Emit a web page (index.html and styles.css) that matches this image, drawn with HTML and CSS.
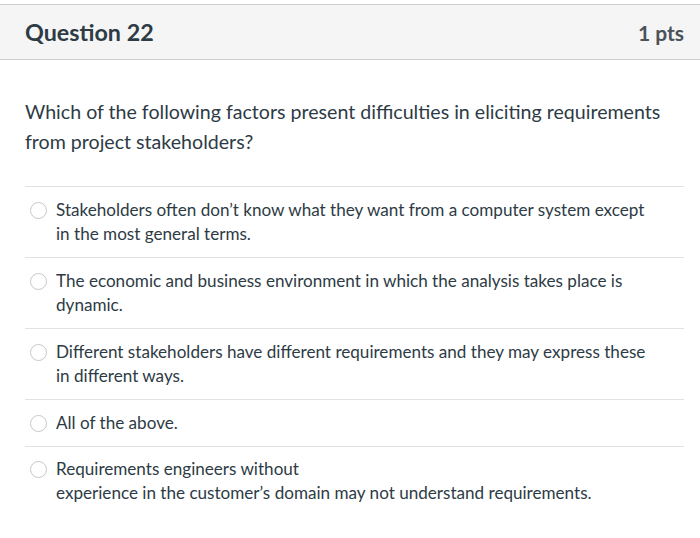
FILE: index.html
```html
<!DOCTYPE html>
<html>
<head>
<meta charset="utf-8">
<link rel="stylesheet" href="styles.css">
</head>
<body>
<div class="question">
  <div class="header">
    <span class="title">Question 22</span>
    <span class="points">1 pts</span>
  </div>
  <div class="content">
    <div class="prompt">Which of the following factors present difficulties in eliciting requirements from project stakeholders?</div>
    <div class="answers">
      <div class="answer"><span class="radio"></span><span class="label">Stakeholders often don’t know what they want from a computer system except in the most general terms.</span></div>
      <div class="answer"><span class="radio"></span><span class="label">The economic and business environment in which the analysis takes place is dynamic.</span></div>
      <div class="answer"><span class="radio"></span><span class="label">Different stakeholders have different requirements and they may express these in different ways.</span></div>
      <div class="answer"><span class="radio"></span><span class="label">All of the above.</span></div>
      <div class="answer last"><span class="radio"></span><span class="label">Requirements engineers without<br>experience in the customer’s domain may not understand requirements.</span></div>
    </div>
  </div>
</div>
</body>
</html>
```
FILE: styles.css
```css
html, body {
  margin: 0;
  padding: 0;
  background: #fff;
}
body {
  font-family: Lato, "Open Sans", sans-serif;
  color: #2d3b45;
}
.question {
  padding-top: 4px;
}
.header {
  display: flex;
  justify-content: space-between;
  align-items: center;
  height: 54px;
  padding: 0 16px 0 25px;
  background: #f5f5f5;
  border-top: 1px solid #c7cdd1;
  border-bottom: 1px solid #c7cdd1;
}
.title {
  font-size: 23.3px;
  font-weight: 700;
  color: #2d3b45;
}
.points {
  font-size: 21px;
  font-weight: 700;
  color: #4a5359;
}
.content {
  padding: 37px 16px 0 25px;
}
.prompt {
  font-size: 19.6px;
  line-height: 30px;
  padding-bottom: 29px;
}
.answer {
  display: flex;
  align-items: flex-start;
  border-top: 1px solid #e0e3e5;
  padding: 11px 0;
  font-size: 17.1px;
  line-height: 24px;
}
.answer.last {
  padding-top: 10px;
}
.radio {
  flex: none;
  width: 15px;
  height: 15px;
  border: 1px solid #c4c8cb;
  border-radius: 50%;
  margin: 4px 9px 0 5px;
  background: #fff;
}
.label {
  flex: 1;
  padding-right: 30px;
}
```
